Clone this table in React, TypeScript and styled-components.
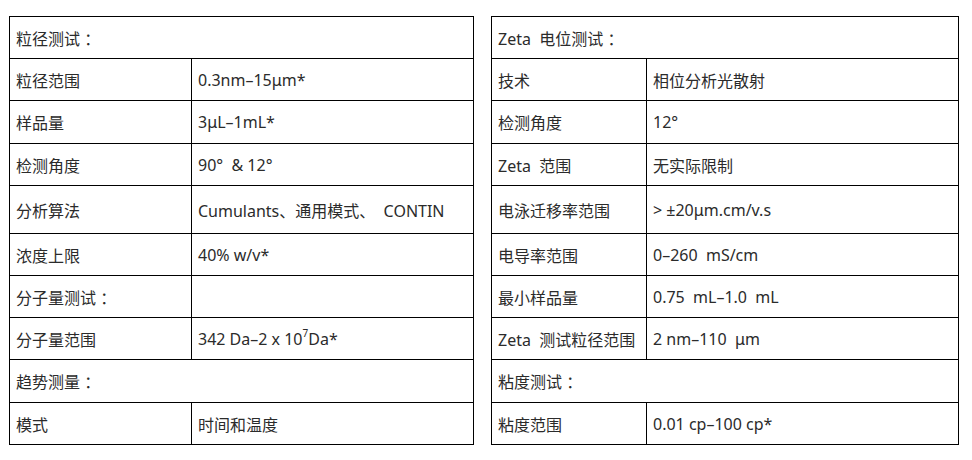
import React, { FunctionComponent, ReactNode } from "react";
import styled, { createGlobalStyle } from "styled-components";

const GlobalStyle = createGlobalStyle`
  body {
    margin: 0;
    background: #fff;
    font-family: "Noto Sans", "Noto Sans CJK SC", sans-serif;
  }
`;

const Page = styled.div`
  display: flex;
  gap: 17px;
  padding: 16px 0 0 9px;
`;

// table drawn as a grid on a black background, the 1px gaps are the rules
const Grid = styled.div<{ $cols: string }>`
  display: grid;
  grid-template-columns: ${(p) => p.$cols};
  grid-template-rows: 41px 41px 42px 41px 47px 41px 41px 41px 42px 41px;
  gap: 1px;
  padding: 1px;
  background: #000;
`;

const Cell = styled.div<{ $span?: boolean }>`
  grid-column: ${(p) => (p.$span ? "1 / 3" : "auto")};
  background: #fff;
  display: flex;
  align-items: center;
  padding: 0 6px;
  font-size: 16px;
  color: #2b2b2b;
  white-space: pre;
  overflow: hidden;

  sup {
    font-size: 10px;
    line-height: 0;
    position: relative;
    top: -1px;
  }
`;

type Row = { label: ReactNode; value?: ReactNode; header?: boolean };

const leftRows: Row[] = [
  { label: "粒径测试 ：", header: true },
  { label: "粒径范围", value: "0.3nm–15μm*" },
  { label: "样品量", value: "3μL–1mL*" },
  { label: "检测角度", value: "90°  & 12°" },
  { label: "分析算法", value: "Cumulants、通用模式、  CONTIN" },
  { label: "浓度上限", value: "40% w/v*" },
  { label: "分子量测试 ：", value: "" },
  {
    label: "分子量范围",
    value: (
      <span>
        342 Da–2 x 10<sup>7</sup>Da*
      </span>
    ),
  },
  { label: "趋势测量 ：", header: true },
  { label: "模式", value: "时间和温度" },
];

const rightRows: Row[] = [
  { label: "Zeta  电位测试 ：", header: true },
  { label: "技术", value: "相位分析光散射" },
  { label: "检测角度", value: "12°" },
  { label: "Zeta  范围", value: "无实际限制" },
  { label: "电泳迁移率范围", value: "> ±20μm.cm/v.s" },
  { label: "电导率范围", value: "0–260  mS/cm" },
  { label: "最小样品量", value: "0.75  mL–1.0  mL" },
  { label: "Zeta  测试粒径范围", value: "2 nm–110  μm" },
  { label: "粘度测试 ：", header: true },
  { label: "粘度范围", value: "0.01 cp–100 cp*" },
];

const SpecTable: FunctionComponent<{ rows: Row[]; cols: string }> = ({
  rows,
  cols,
}) => (
  <Grid $cols={cols}>
    {rows.map((row, i) =>
      row.header ? (
        <Cell key={i} $span>
          {row.label}
        </Cell>
      ) : (
        <React.Fragment key={i}>
          <Cell>{row.label}</Cell>
          <Cell>{row.value}</Cell>
        </React.Fragment>
      )
    )}
  </Grid>
);

const App: FunctionComponent = () => (
  <>
    <GlobalStyle />
    <Page>
      <SpecTable rows={leftRows} cols="181px 281px" />
      <SpecTable rows={rightRows} cols="154px 311px" />
    </Page>
  </>
);

export default App;
